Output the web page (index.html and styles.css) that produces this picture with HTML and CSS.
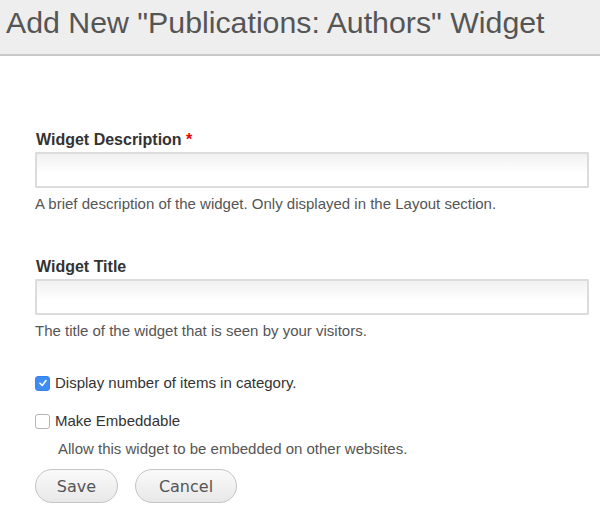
FILE: index.html
```html
<!DOCTYPE html>
<html>
<head>
<meta charset="utf-8">
<link rel="stylesheet" href="styles.css">
</head>
<body>
<header class="page-header">
  <h1 class="page-title">Add New "Publications: Authors" Widget</h1>
</header>
<form class="widget-form">
  <div class="field field-first">
    <label class="field-label">Widget Description <span class="required">*</span></label>
    <input class="text-input" type="text">
    <div class="help">A brief description of the widget. Only displayed in the Layout section.</div>
  </div>
  <div class="field">
    <label class="field-label">Widget Title</label>
    <input class="text-input" type="text">
    <div class="help">The title of the widget that is seen by your visitors.</div>
  </div>
  <div class="check-row check-first">
    <span class="box checked"><svg width="10" height="10" viewBox="0 0 10 10"><path d="M2 5.2 L4.2 7.4 L8 2.6" fill="none" stroke="#fff" stroke-width="1.6" stroke-linecap="round" stroke-linejoin="round"/></svg></span>
    <span class="check-label">Display number of items in category.</span>
  </div>
  <div class="check-row check-second">
    <span class="box"></span>
    <span class="check-label">Make Embeddable</span>
  </div>
  <div class="help help-indent">Allow this widget to be embedded on other websites.</div>
  <div class="actions">
    <button type="button" class="btn btn-save">Save</button>
    <button type="button" class="btn btn-cancel">Cancel</button>
  </div>
</form>
</body>
</html>
```
FILE: styles.css
```css
html, body {
  margin: 0;
  padding: 0;
  background: #fff;
  font-family: "Liberation Sans", Arial, sans-serif;
}
.page-header {
  background: #eeeeee;
  height: 54px;
  border-bottom: 2px solid #c9c9c9;
  box-sizing: content-box;
  padding: 0 6px;
}
.page-title {
  margin: 0;
  font-weight: normal;
  font-size: 30.3px;
  line-height: 46px;
  color: #555;
}
.widget-form {
  padding: 0 11px 0 35px;
}
.field-first {
  padding-top: 74px;
}
.field + .field {
  padding-top: 44px;
}
.field-label {
  display: block;
  font-weight: bold;
  font-size: 16px;
  color: #333;
  line-height: 19px;
  margin-left: 1px;
  margin-bottom: 3px;
}
.required {
  color: #e00;
}
.text-input {
  display: block;
  width: 554px;
  height: 36px;
  box-sizing: border-box;
  border: 2px solid #dcdcdc;
  border-radius: 1px;
  background: linear-gradient(#f1f1f1, #fff 60%);
  margin: 0;
  padding: 0;
}
.help {
  font-size: 15px;
  color: #555;
  margin-top: 7px;
  line-height: 18px;
}
.check-row {
  display: flex;
  align-items: center;
  gap: 5px;
  font-size: 15px;
  color: #333;
  line-height: 18px;
}
.check-first {
  margin-top: 34px;
}
.check-second {
  margin-top: 20px;
}
.box {
  width: 13px;
  height: 13px;
  border: 1px solid #b5b5b5;
  border-radius: 3px;
  background: #fff;
  display: flex;
  align-items: center;
  justify-content: center;
}
.box.checked {
  background: #3d8df5;
  border-color: #3a84e6;
}
.help-indent {
  margin-left: 23px;
  margin-top: 10px;
}
.actions {
  margin-top: 11px;
  display: flex;
  gap: 17px;
}
.btn {
  height: 34px;
  border: 1px solid #c4c4c4;
  border-radius: 17px;
  background: linear-gradient(#fafafa, #e8e8e8);
  font-family: "DejaVu Sans", sans-serif;
  font-size: 16px;
  color: #555;
  padding: 0;
}
.btn-save {
  width: 83px;
}
.btn-cancel {
  width: 102px;
}
```
